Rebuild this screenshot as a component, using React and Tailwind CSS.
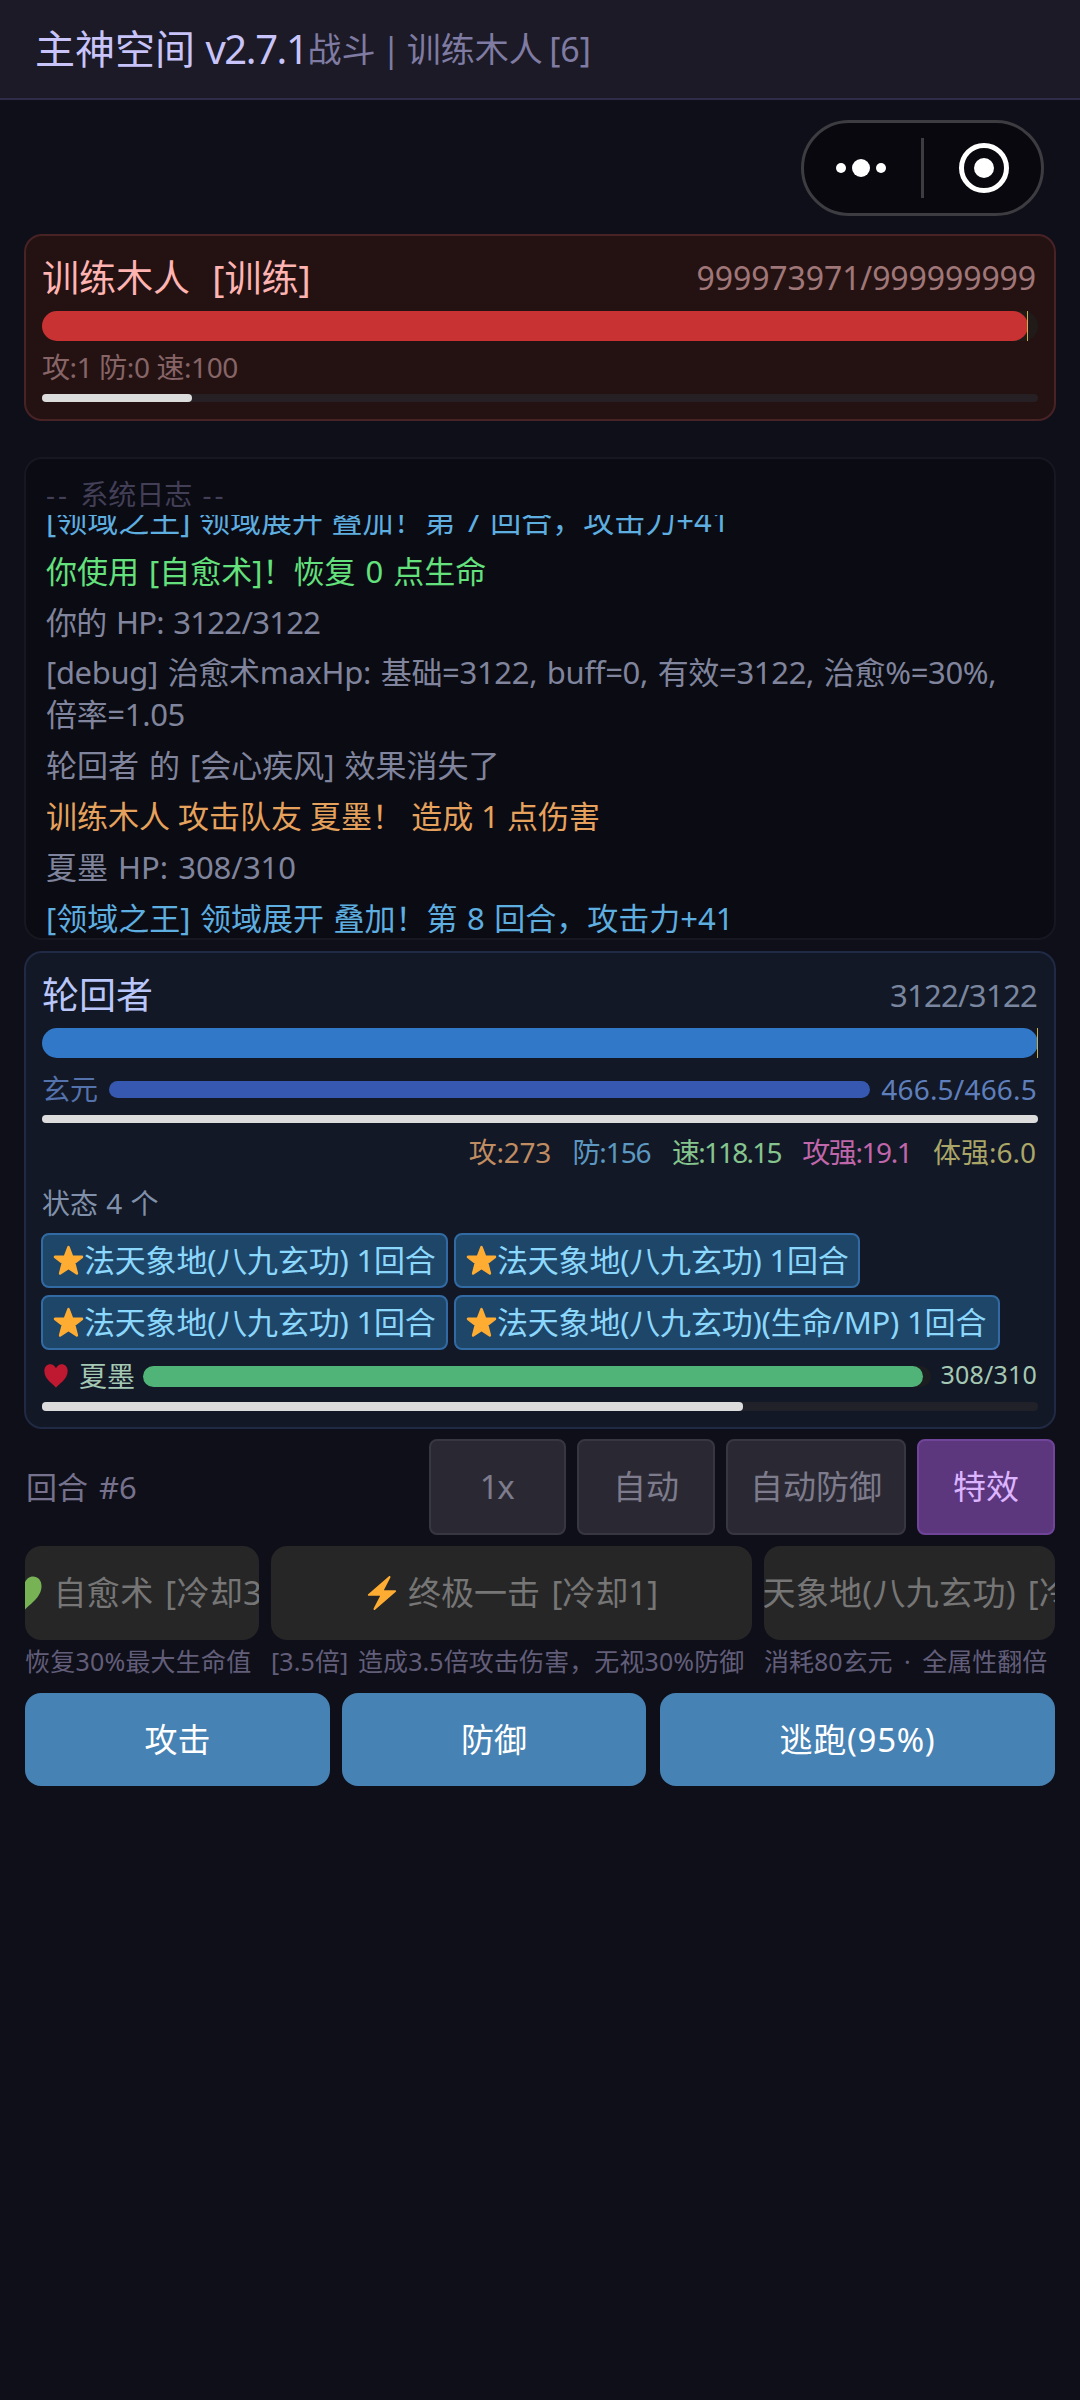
import React from 'react';

const logs = [
  { text: '[领域之王] 领域展开 叠加！第 7 回合，攻击力+41', color: 'text-[#5eaee0]', spacing: '[word-spacing:0.5px]' },
  { text: '你使用 [自愈术]！恢复 0 点生命', color: 'text-[#64e07c]', spacing: '[word-spacing:2px]' },
  { text: '你的 HP: 3122/3122', color: 'text-[#80849c]', spacing: '[word-spacing:2px] tracking-[-0.7px]' },
  { text: '[debug] 治愈术maxHp: 基础=3122, buff=0, 有效=3122, 治愈%=30%, 倍率=1.05', color: 'text-[#80849c]', spacing: '[word-spacing:2px] tracking-[-0.32px]' },
  { text: '轮回者 的 [会心疾风] 效果消失了', color: 'text-[#80849c]', spacing: '[word-spacing:2px]' },
  { text: '训练木人 攻击队友 夏墨！ 造成 1 点伤害', color: 'text-[#e6a25c]', spacing: '' },
  { text: '夏墨 HP: 308/310', color: 'text-[#80849c]', spacing: '[word-spacing:2px]' },
  { text: '[领域之王] 领域展开 叠加！第 8 回合，攻击力+41', color: 'text-[#5eaee0]', spacing: '[word-spacing:1.5px]' },
];

const stats = [
  { text: '攻:273', color: 'text-[#c08c62] tracking-[-0.3px]' },
  { text: '防:156', color: 'text-[#5c98c2] tracking-[-1.1px]' },
  { text: '速:118.15', color: 'text-[#86c48e] tracking-[-1.8px]' },
  { text: '攻强:19.1', color: 'text-[#c066aa] tracking-[-1.4px]' },
  { text: '体强:6.0', color: 'text-[#aaa668]' },
];

const buffs = [
  { text: '法天象地(八九玄功) 1回合', width: 'w-[407px]' },
  { text: '法天象地(八九玄功) 1回合', width: 'w-[406px]' },
  { text: '法天象地(八九玄功) 1回合', width: 'w-[407px]' },
  { text: '法天象地(八九玄功)(生命/MP) 1回合', width: 'w-[546px]' },
];

const Star = ({ size }) => (
  <svg width={size} height={size} viewBox="0 0 36 36" className="shrink-0">
    <path
      d="M18 2.5 L22.1 13.3 L33.6 13.8 L24.6 21 L27.7 33 L18 26.6 L8.3 33 L11.4 21 L2.4 13.8 L13.9 13.3 Z"
      fill="#ffac33"
      stroke="#ffac33"
      strokeWidth="3"
      strokeLinejoin="round"
    />
  </svg>
);

const Heart = ({ size, color }) => (
  <svg width={size} height={size} viewBox="0 0 36 36" className="shrink-0">
    <path
      d="M18 35.5 C14 30.5 0.5 23 0.5 10.5 C0.5 4.5 4.5 0.5 9.5 0.5 C13.5 0.5 16.5 3 18 6.5 C19.5 3 22.5 0.5 26.5 0.5 C31.5 0.5 35.5 4.5 35.5 10.5 C35.5 23 22 30.5 18 35.5 Z"
      fill={color}
    />
  </svg>
);

const Bolt = ({ size }) => (
  <svg width={size} height={size} viewBox="0 0 36 36" className="shrink-0">
    <path
      d="M32.938 15.651C32.792 15.26 32.418 15 32 15H19.925L26.89 1.458c.219-.426.106-.947-.271-1.243C26.437.071 26.218 0 26 0c-.233 0-.466.082-.653.243L18 6.588 3.347 19.243c-.316.273-.43.714-.284 1.105S3.582 21 4 21h12.075L9.11 34.542c-.219.426-.106.947.271 1.243.182.144.401.215.619.215.233 0 .466-.082.653-.243L18 29.412l14.653-12.655c.317-.273.43-.714.285-1.106z"
      fill="#ffac33"
    />
  </svg>
);

const Bar = ({ percent, track, fill, className, marker }) => (
  <div className={`relative ${track} ${className}`}>
    <div className={`h-full rounded-[inherit] ${fill}`} style={{ width: `${percent}%` }}></div>
    {marker && <div className="absolute inset-y-0 w-px bg-[#c9b04a]" style={{ left: `calc(${percent}% - 1px)` }}></div>}
  </div>
);

const App = () => {
  return (
    <div className="w-[1080px] h-[2400px] overflow-hidden bg-[#0f0f19] font-['Noto_Sans','Noto_Sans_CJK_SC',sans-serif] whitespace-nowrap">
      {/* Header */}
      <header className="h-[100px] bg-[#1b1a26] border-b-2 border-[#2f2c49] flex items-center pl-[35px]">
        <h1 className="text-[40px] leading-none text-[#c8c4fa]">主神空间 <span className="tracking-[-1.4px]">v2.7.1</span></h1>
        <span className="text-[34px] leading-none text-[#7f7ba2] [word-spacing:-2.5px]">战斗 | 训练木人 [6]</span>
      </header>

      {/* Capsule menu */}
      <div className="flex justify-end pt-5 pr-9">
        <div className="w-[243px] h-24 rounded-full border-[3px] border-[#3c3c41] bg-[#09080e] flex items-center">
          <svg width="237" height="90" viewBox="0 0 237 90">
            <g fill="#fff">
              <circle cx="37" cy="45" r="5" />
              <circle cx="57" cy="45" r="9" />
              <circle cx="77" cy="45" r="5" />
              <circle cx="180" cy="45" r="10" />
            </g>
            <rect x="117" y="15" width="3" height="60" fill="#3c3c41" />
            <circle cx="180" cy="45" r="22.5" fill="none" stroke="#fff" strokeWidth="5" />
          </svg>
        </div>
      </div>

      <main className="px-6 pt-[18px]">
        {/* Enemy */}
        <section className="h-[187px] rounded-[18px] border-2 border-[#482326] bg-[#241213] px-4 pt-3">
          <div className="h-[60px] mb-[3px] flex items-center justify-between">
            <h2 className="text-[37px] text-[#ffb4b2] whitespace-pre [word-spacing:1.5px]">训练木人  [训练]</h2>
            <span className="pr-0.5 text-[32px] text-[#a07778] tracking-[-0.1px]">999973971/999999999</span>
          </div>
          <Bar percent={99} track="bg-[#201b19]" fill="bg-[#c83232]" className="h-[30px] rounded-full" marker />
          <div className="h-[53px] pb-0.5 flex items-center text-[28px] text-[#876567] tracking-[-0.4px]">攻:1 防:0 速:100</div>
          <Bar percent={15.1} track="bg-[#262024]" fill="bg-[#dcdcdc]" className="h-2 rounded" />
        </section>

        {/* Log */}
        <section className="mt-9 h-[483px] rounded-[18px] border-2 border-[#171722] bg-[#0a0b13] px-5 pt-4 flex flex-col">
          <div className="h-10 pb-0.5 shrink-0 flex items-center text-[28px] text-[#433f57]">
            <span className="whitespace-pre tracking-[3px]">-- </span>系统日志<span className="whitespace-pre tracking-[3px]"> --</span>
          </div>
          <div className="flex-1 overflow-hidden">
            <div className="-mt-4 flex flex-col gap-[8.8px] text-[31px] leading-[42px] whitespace-normal">
              {logs.map((l, i) => <p key={i} className={`${l.color} ${l.spacing}`}>{l.text}</p>)}
            </div>
          </div>
        </section>

        {/* Player */}
        <section className="mt-[11px] h-[478px] rounded-[18px] border-2 border-[#202a44] bg-[#121825] px-4 pt-3">
          <div className="h-[60px] mb-[3px] flex items-center justify-between">
            <h2 className="text-[37px] text-[#b9c6fa]">轮回者</h2>
            <span className="pr-px text-[31px] text-[#7a869f] tracking-[-0.7px]">3122/3122</span>
          </div>
          <Bar percent={100} track="bg-[#121720]" fill="bg-[#3278c8]" className="h-[30px] rounded-full" marker />
          <div className="h-[57px] pt-[5px] flex items-center text-[28px]">
            <span className="w-[67px] text-[#5472ac]">玄元</span>
            <Bar percent={100} track="bg-[#121720]" fill="bg-[#3658b0]" className="w-[761px] h-[17px] rounded-full" />
            <span className="ml-auto pr-px text-[#5f7fbc] tracking-[0.2px]">466.5/466.5</span>
          </div>
          <Bar percent={100} track="bg-[#212129]" fill="bg-[#dcdcdc]" className="h-2 rounded" />
          <div className="h-[60px] pb-0.5 pr-0.5 flex items-center justify-end gap-[21.5px] text-[28px]">
            {stats.map(s => <span key={s.text} className={s.color}>{s.text}</span>)}
          </div>
          <div className="h-[42px] pb-0.5 flex items-center text-[28px] text-[#8090ab] [word-spacing:1px]">状态 4 个</div>
          <div className="mt-2 -ml-px flex flex-wrap gap-x-1.5 gap-y-[7px]">
            {buffs.map((b, i) => (
              <div key={i} className={`h-[55px] rounded-lg border-2 border-[#326ba3] bg-[#1e4669] pl-2.5 flex items-center text-[31px] text-[#8cd7fc] tracking-[-0.2px] ${b.width}`}>
                <Star size={31} />
                <span>{b.text}</span>
              </div>
            ))}
          </div>
          <div className="h-[52px] flex items-center">
            <div className="w-[37px] pl-0.5"><Heart size={24} color="#be1931" /></div>
            <span className="w-16 text-[28px] text-[#a5c8b4]">夏墨</span>
            <Bar percent={99} track="bg-[#1b1d20]" fill="bg-[#50b478]" className="w-[788px] h-[21px] rounded-full" />
            <span className="ml-auto pb-0.5 pr-px text-[25px] text-[#a5c8b4] tracking-[0.2px]">308/310</span>
          </div>
          <Bar percent={70.4} track="bg-[#212129]" fill="bg-[#dcdcdc]" className="h-[9px] rounded" />
        </section>
      </main>

      <footer className="px-[25px] pt-2.5">
        {/* Round controls */}
        <div className="h-24 flex gap-[11px] text-[33px] text-[#7d7b8c]">
          <span className="flex-1 self-center pl-px text-[31px] text-[#76728e] [word-spacing:3px]">回合 #6</span>
          <button className="w-[137px] rounded-lg border-2 border-[#373641] bg-[#2a2933] pr-0.5 tracking-[-1.5px]">1x</button>
          <button className="w-[138px] rounded-lg border-2 border-[#373641] bg-[#2a2933]">自动</button>
          <button className="w-[180px] rounded-lg border-2 border-[#373641] bg-[#2a2933]">自动防御</button>
          <button className="w-[138px] rounded-lg border-2 border-[#704499] bg-[#5c377e] text-[#dcb4ff]">特效</button>
        </div>

        {/* Skills */}
        <div className="mt-[11px] flex gap-3 text-[25px] text-[#625e7a]">
          <div className="w-[234px]">
            <button className="w-full h-[94px] rounded-2xl bg-[#262627] overflow-hidden flex items-center justify-center gap-3 pr-[3px] text-[33px] text-[#767676] tracking-[0.3px] [word-spacing:3px]">
              <Heart size={34} color="#77b255" />
              <span>自愈术 [冷却3]</span>
            </button>
            <div className="h-11 flex items-center tracking-[0.2px]">恢复30%最大生命值</div>
          </div>
          <div className="w-[481px]">
            <button className="w-full h-[94px] rounded-2xl bg-[#262627] overflow-hidden flex items-center justify-center gap-[9px] text-[33px] text-[#767676] [word-spacing:3px]">
              <Bolt size={34} />
              <span>终极一击 [冷却1]</span>
            </button>
            <div className="h-11 flex items-center tracking-[0.1px] [word-spacing:3px]">[3.5倍] 造成3.5倍攻击伤害，无视30%防御</div>
          </div>
          <div className="w-[291px]">
            <button className="w-full h-[94px] rounded-2xl bg-[#262627] overflow-hidden flex items-center justify-center gap-3 text-[33px] text-[#767676] tracking-[0.3px] [word-spacing:3px]">
              <Star size={34} />
              <span>法天象地(八九玄功) [冷却3]</span>
            </button>
            <div className="h-11 flex items-center [word-spacing:5px]">消耗80玄元 · 全属性翻倍</div>
          </div>
        </div>

        {/* Actions */}
        <div className="mt-[9px] h-[93px] flex text-[33px] text-white">
          <button className="w-[305px] rounded-2xl bg-[#4682b4]">攻击</button>
          <button className="ml-3 w-[304px] rounded-2xl bg-[#4682b4]">防御</button>
          <button className="ml-auto w-[395px] rounded-2xl bg-[#4682b4] tracking-[0.7px]">逃跑(95%)</button>
        </div>
      </footer>
    </div>
  );
};

export default App;
